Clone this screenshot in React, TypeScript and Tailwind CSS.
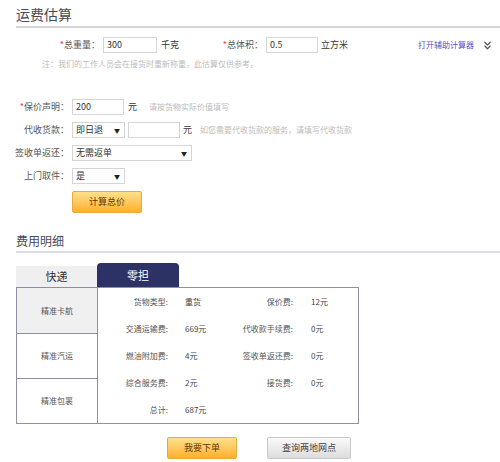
import React from 'react';
import { ChevronsDown } from 'lucide-react';

const FONT = { fontFamily: '"Noto Sans CJK SC", "Noto Sans", sans-serif' };

function Star() {
  return <span className="text-[#e4393c]">*</span>;
}

function TextBox({ value, w }: { value?: string; w: string }) {
  return (
    <div className={`${w} h-[16px] border border-[#d5d5d5] bg-white pl-[3px] text-[9px] leading-[14px] text-[#333]`}>
      {value}
    </div>
  );
}

function Select({ value, w }: { value: string; w: string }) {
  return (
    <div className={`${w} h-[16px] border border-[#d5d5d5] bg-white pl-[3px] pr-[4px] flex items-center justify-between text-[9px] text-[#333]`}>
      <span>{value}</span>
      <span className="text-[6px] text-[#222]">▼</span>
    </div>
  );
}

const details = [
  ['货物类型:', '重货', '保价费:', '12元'],
  ['交通运输费:', '669元', '代收款手续费:', '0元'],
  ['燃油附加费:', '4元', '签收单返还费:', '0元'],
  ['综合服务费:', '2元', '接货费:', '0元'],
  ['总计:', '687元', '', ''],
];

export default function App() {
  return (
    <div className="w-[500px] h-[462px] overflow-hidden bg-white text-[#555]" style={FONT}>
      {/* estimate header */}
      <div className="ml-[16px] pt-[6px] pb-[3px] border-b-2 border-[#d4d4d4] text-[14px] leading-[17px] text-[#4a4a58]">
        运费估算
      </div>

      {/* weight / volume */}
      <div className="mt-[9px] h-[16px] flex items-center text-[9px]">
        <div className="w-[100px] text-right"><Star />总重量：</div>
        <div className="ml-[3px]"><TextBox value="300" w="w-[54px]" /></div>
        <div className="ml-[4px] w-[18px] text-[#333]">千克</div>
        <div className="w-[84px] text-right"><Star />总体积：</div>
        <div className="ml-[3px]"><TextBox value="0.5" w="w-[52px]" /></div>
        <div className="ml-[3px] text-[#333]">立方米</div>
        <div className="ml-auto flex items-center text-[8px] text-[#5b4fc9]">
          打开辅助计算器
          <ChevronsDown className="ml-[7px] mr-[6px] w-[13px] h-[13px] text-[#555]" strokeWidth={2.2} />
        </div>
      </div>

      <div className="mt-[6px] ml-[42px] text-[8px] leading-[10px] text-[#bcbcbc]">
        注：我们的工作人员会在接货时重新称重，此估算仅供参考。
      </div>

      {/* value / collection options */}
      <div className="mt-[30px] flex flex-col gap-[7px] text-[9px]">
        <div className="h-[16px] flex items-center">
          <div className="w-[69px] text-right"><Star />保价声明：</div>
          <div className="ml-[3px]"><TextBox value="200" w="w-[52px]" /></div>
          <div className="ml-[4px] text-[#333]">元</div>
          <div className="ml-[12px] text-[8px] text-[#bcbcbc]">请按货物实际价值填写</div>
        </div>
        <div className="h-[16px] flex items-center">
          <div className="w-[69px] text-right">代收货款：</div>
          <div className="ml-[3px]"><Select value="即日退" w="w-[53px]" /></div>
          <div className="ml-[3px]"><TextBox w="w-[52px]" /></div>
          <div className="ml-[3px] text-[#333]">元</div>
          <div className="ml-[8px] text-[8px] text-[#bcbcbc]">如您需要代收货款的服务，请填写代收货款</div>
        </div>
        <div className="h-[16px] flex items-center">
          <div className="w-[69px] text-right">签收单返还：</div>
          <div className="ml-[3px]"><Select value="无需返单" w="w-[120px]" /></div>
        </div>
        <div className="h-[16px] flex items-center">
          <div className="w-[69px] text-right">上门取件：</div>
          <div className="ml-[3px]"><Select value="是" w="w-[53px]" /></div>
        </div>
      </div>

      <div className="mt-[7px] ml-[72px] w-[70px] h-[22px] rounded-[2px] border border-[#eaa93a] bg-gradient-to-b from-[#ffe08a] to-[#ffb01f] flex items-center justify-center text-[9px] text-[#5b3a00]">
        计算总价
      </div>

      {/* fee details */}
      <div className="mt-[20px] ml-[16px] pb-[3px] border-b-2 border-[#dcdce8] text-[12px] leading-[15px] text-[#4a4a58]">
        费用明细
      </div>

      <div className="ml-[16px] mt-[10px] flex items-end">
        <div className="w-[81px] h-[21px] bg-[#efefef] flex items-center justify-center text-[11px] text-[#333]">快递</div>
        <div className="w-[82px] h-[24px] rounded-t-[4px] bg-[#2d3266] flex items-center justify-center text-[11px] text-white">零担</div>
      </div>

      <div className="ml-[16px] flex text-[8px] text-[#555]">
        <div className="w-[81px] border-l border-t border-b border-[#8e8fa2] flex flex-col">
          <div className="h-[46px] bg-[#f0f0f0] border-b border-[#8e8fa2] flex items-center justify-center">精准卡航</div>
          <div className="h-[45px] border-b border-[#8e8fa2] flex items-center justify-center">精准汽运</div>
          <div className="h-[44px] flex items-center justify-center">精准包裹</div>
        </div>
        <div className="w-[262px] h-[137px] border border-[#8e8fa2] flex flex-col">
          {details.map((r, i) => (
            <div key={i} className="h-[27px] flex items-center">
              <div className="w-[70px] text-right">{r[0]}</div>
              <div className="ml-[17px] w-[45px] text-[#444]">{r[1]}</div>
              <div className="w-[63px] text-right">{r[2]}</div>
              <div className="ml-[18px] text-[#444]">{r[3]}</div>
            </div>
          ))}
        </div>
      </div>

      <div className="mt-[13px] flex text-[9px]">
        <div className="ml-[167px] w-[70px] h-[22px] rounded-[2px] border border-[#eaa93a] bg-gradient-to-b from-[#ffe08a] to-[#ffb01f] flex items-center justify-center text-[#5b3a00]">
          我要下单
        </div>
        <div className="ml-[30px] w-[84px] h-[22px] rounded-[2px] border border-[#c9c9c9] bg-gradient-to-b from-[#fafafa] to-[#dcdcdc] flex items-center justify-center text-[#444]">
          查询两地网点
        </div>
      </div>
    </div>
  );
}
